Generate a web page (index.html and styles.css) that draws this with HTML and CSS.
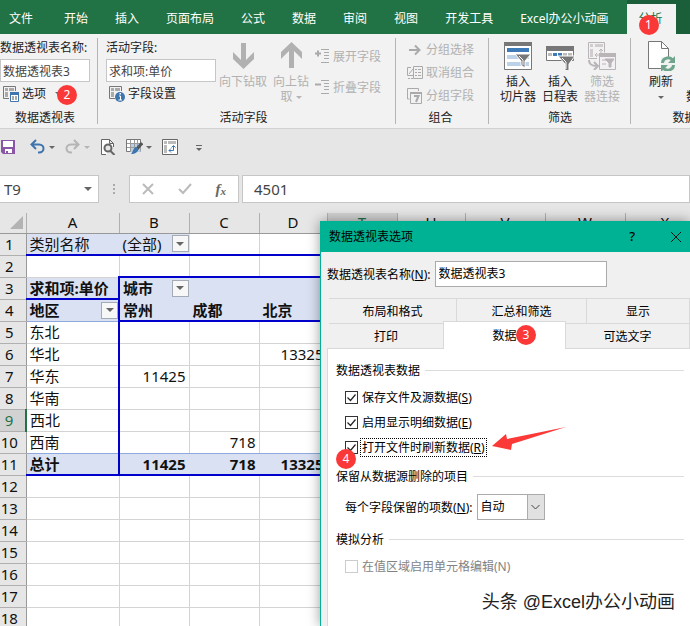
FILE: index.html
```html
<!DOCTYPE html>
<html lang="zh-CN">
<head>
    <meta charset="UTF-8">
    <meta name="viewport" content="width=device-width, initial-scale=1.0">
    <title>数据透视表选项</title>
    <link rel="stylesheet" href="styles.css">
</head>
<body>
    <div class="app">
        <nav class="tabs">
            <button class="tab file">文件</button>
            <button class="tab">开始</button>
            <button class="tab">插入</button>
            <button class="tab">页面布局</button>
            <button class="tab">公式</button>
            <button class="tab">数据</button>
            <button class="tab">审阅</button>
            <button class="tab">视图</button>
            <button class="tab">开发工具</button>
            <button class="tab last">Excel办公小动画</button>
            <div class="context-tabs">
                <button class="tab active">分析<span class="badge badge-1">1</span></button>
            </div>
        </nav>

        <div class="ribbon">
            <div class="group group-pivot">
                <div class="group-body">
                    <div class="field">
                        <label for="pivot-name">数据透视表名称:</label>
                        <input id="pivot-name" type="text" value="数据透视表3">
                        <button class="small-btn">
                            <svg width="16" height="16" viewBox="0 0 16 16" fill="none"><path d="M.5 12.500V.5h12V5M.5 12.500H6" stroke="#777"/><path d="M2 2h3v3H2zM6 2h5v3H6zM2 6h3v5H2z" fill="#aaa"/><path d="M7.500 6.500h8v9h-8z" fill="#fff" stroke="#3f75ad"/><path d="M7 6h9v3H7z" fill="#3f75ad"/><path d="M9 11h2M12 11h2M9 13h2M12 13h2" stroke="#555"/></svg>
                            选项
                            <i class="caret"></i>
                        </button>
                        <span class="badge badge-2">2</span>
                    </div>
                </div>
                <div class="group-name">数据透视表</div>
            </div>

            <div class="group group-field">
                <div class="group-body">
                    <div class="field">
                        <label for="active-field">活动字段:</label>
                        <input id="active-field" type="text" value="求和项:单价">
                        <button class="small-btn">
                            <svg width="16" height="16" viewBox="0 0 16 16" fill="none"><path d="M.5 12.500V.5h12V5M.5 12.500H6" stroke="#777"/><path d="M2 2h3v3H2zM6 2h5v3H6zM2 6h3v5H2z" fill="#aaa"/><circle cx="11" cy="11" r="5" fill="#3f75ad"/><path d="M10 10h1.500v4M9.500 14H13" stroke="#fff"/><path d="M10.500 7h1.500v1.500h-1.500z" fill="#fff"/></svg>
                            字段设置
                        </button>
                    </div>
                    <button class="big-btn" disabled>
                        <svg width="28" height="28" viewBox="0 0 28 28"><path d="M12 1h5v17l8-8v7L14.500 27 4 17v-7l8 8z" fill="#b1b1b1"/></svg>
                        <span>向下钻取</span>
                    </button>
                    <button class="big-btn" disabled>
                        <svg width="28" height="28" viewBox="0 0 28 28"><path d="M12 26h5V9l8 8v-7L14.500 0 4 10v7l8-8z" fill="#b1b1b1"/></svg>
                        <span>向上钻<br>取 <i class="caret"></i></span>
                    </button>
                    <div class="stack stack-wide">
                        <button class="small-btn" disabled>
                            <svg width="15" height="15" viewBox="0 0 15 15" fill="none" stroke="#aaa"><path d="M0 4.500h6M3 1.500v6" stroke-width="2"/><path d="M6 .5h8M9 3.500h5M9 6.500h5M9 9.500h5M6 13.500h8" /></svg>
                            展开字段
                        </button>
                        <button class="small-btn" disabled>
                            <svg width="15" height="15" viewBox="0 0 15 15" fill="none" stroke="#aaa"><path d="M0 4.500h6" stroke-width="2"/><path d="M6 .5h8M9 3.500h5M9 6.500h5M9 9.500h5M6 13.500h8"/></svg>
                            折叠字段
                        </button>
                    </div>
                </div>
                <div class="group-name">活动字段</div>
            </div>

            <div class="group group-combine">
                <div class="group-body">
                    <div class="stack">
                        <button class="small-btn" disabled>
                            <svg width="16" height="16" viewBox="0 0 16 16" fill="none"><path d="M2 8h10M8 3.500 12.500 8 8 12.500" stroke="#aaa" stroke-width="2"/></svg>
                            分组选择
                        </button>
                        <button class="small-btn" disabled>
                            <svg width="16" height="16" viewBox="0 0 16 16" fill="none" stroke="#aaa"><path d="M4 2.500H.5v8H7M1 13.500h2M4 13.500h2M2 9l4-5M6.500 1.500h9v12h-9zM8 4.500h2M11 4.500h3M8 7.500h2M11 7.500h3M8 10.500h2M11 10.500h3"/></svg>
                            取消组合
                        </button>
                        <button class="small-btn" disabled>
                            <svg width="16" height="16" viewBox="0 0 16 16" fill="none" stroke="#aaa"><path d="M2.500 11H.5V.5h11V3"/><path d="M3.500 4.500h11v11h-11z"/><path d="M3 5h12" stroke-width="2"/><path d="M7 8h4.500L9 14" stroke-width="2"/></svg>
                            分组字段
                        </button>
                    </div>
                </div>
                <div class="group-name">组合</div>
            </div>

            <div class="group group-filter">
                <div class="group-body">
                    <button class="big-btn">
                        <svg width="28" height="28" viewBox="0 0 28 28"><path d="M.5.5h27v27H.5z" fill="#fff" stroke="#777"/><path d="M0 0h28v4H0z" fill="#777"/><path d="M3 6h22v4H3z" fill="#3f7ab8"/><path d="M3 13h22v4H3zM3 20h22v4H3z" fill="#bcd2e8"/><path d="M11 12h16l-6 7v7l-4-3v-4z" fill="#777" stroke="#fff"/><path d="M15 14l4 4v5" fill="none" stroke="#fff"/></svg>
                        <span>插入<br>切片器</span>
                    </button>
                    <button class="big-btn">
                        <svg width="30" height="28" viewBox="0 0 30 28"><path d="M1.500 4.500h27v14h-27z" fill="#fff" stroke="#777"/><path d="M1 4h28v5H1z" fill="#777"/><path d="M3 11h4v3H3zM18 11h4v3h-4zM23 11h4v3h-4z" fill="#bbb"/><path d="M8 11h4v3H8zM13 11h4v3h-4z" fill="#3f7ab8"/><path d="M13 14h17l-6 8v8h-4v-8z" fill="#777" stroke="#fff"/><path d="M17 16l4 4v7" fill="none" stroke="#fff"/></svg>
                        <span>插入<br>日程表</span>
                    </button>
                    <button class="big-btn" disabled>
                        <svg width="28" height="28" viewBox="0 0 28 28" fill="none" stroke="#b8b4b8"><path d="M.5.5h16v10M.5.5v16H9"/><path d="M2 3.500h3M7 3.500h8M3.500 7v8" stroke-width="3" stroke="#d0ccd0"/><path d="M8 13h5M13 13V7M11 9l2-2 2 2M9 11l-2 2 2 2"/><path d="M1 18c0 5 3 6 8 6M6 20l4 4-4 4" stroke-width="2"/><path d="M11.500 11.500h16v16h-16z" fill="#f3f0f3"/><path d="M11 13h17" stroke-width="4"/><path d="M14 18h5M14 22h4"/><path d="M17 17h9l-3 4v4h-2v-4z" fill="#b8b4b8"/></svg>
                        <span>筛选<br>器连接</span>
                    </button>
                </div>
                <div class="group-name">筛选</div>
            </div>

            <div class="group group-data">
                <div class="group-body">
                    <button class="big-btn">
                        <svg width="28" height="30" viewBox="0 0 28 30" fill="none"><path d="M1.500.5h13l7 7v20h-20z" fill="#fff" stroke="#777"/><path d="M14.500.5v7h7" stroke="#777"/><path d="M14 16h14v14H14z" fill="#f2f2f2"/><path d="M15.500 22c0-5 7-7 10-3M26.500 24c0 5-7 7-10 3" stroke="#6fa58d" stroke-width="3"/><path d="M28 15v7h-7zM14 31v-7h7z" fill="#6fa58d"/></svg>
                        <span>刷新<br><i class="caret"></i></span>
                    </button>
                    <button class="big-btn">
                        <span class="icon-space"></span>
                        <span>更改<br>数据源</span>
                    </button>
                </div>
                <div class="group-name">数据</div>
            </div>
        </div>

        <div class="quick-bar">
            <button class="save" aria-label="保存">
                <svg width="16" height="16" viewBox="0 0 16 16"><path d="M1 1h14v14H3l-2-2z" fill="#8a56a8"/><path d="M3 2h10v6H3zM5 10h7v4H5z" fill="#fff"/><path d="M6 12h2v3H6z" fill="#8a56a8"/></svg>
            </button>
            <button aria-label="撤消">
                <svg width="16" height="16" viewBox="0 0 16 16" fill="none" stroke="#3f75ad" stroke-width="2"><path d="M6 1 1.500 5.500 6 10M2 5.500h7c6 0 6 8 0 8H8"/></svg>
                <i class="caret"></i>
            </button>
            <button aria-label="恢复" disabled>
                <svg width="16" height="16" viewBox="0 0 16 16" fill="none" stroke="#b5b5b5" stroke-width="2"><path d="m9 1 4.500 4.500L9 10M13 5.500H6c-6 0-6 8 0 8h1"/></svg>
                <i class="caret"></i>
            </button>
            <button aria-label="打印预览">
                <svg width="16" height="16" viewBox="0 0 16 16" fill="none" stroke="#666"><path d="M6 15.500H1.500V.5h8L13.500 4.500V8M9.500.5v4h4" fill="#fff"/><circle cx="8" cy="9" r="3.500" stroke-width="2" fill="#e6e6e6"/><path d="m10.500 12 4 4" stroke-width="2"/></svg>
            </button>
            <button aria-label="套用表格格式">
                <svg width="17" height="16" viewBox="0 0 17 16" fill="none"><path d="M.5.5h14v12H.5z" fill="#fff" stroke="#777"/><path d="M4.500 5h10v8h-10z" fill="#b9cfe6"/><path d="M1 4.500h14M1 8.500h14M4.500 1v11M8.500 1v11M11.500 1v11" stroke="#999"/><path d="m16 4-5 6" stroke="#555" stroke-width="3"/><path d="M12 9c1 4-3 6-7 6 2-2 2-6 5-7z" fill="#3f75ad"/></svg>
                <i class="caret"></i>
            </button>
            <button aria-label="数据透视表">
                <svg width="16" height="16" viewBox="0 0 16 16" fill="none"><path d="M.5.5h15v15H.5z" fill="#fff" stroke="#666"/><path d="M2 2h3v3H2zM6 2h8v3H6zM2 6h3v8H2z" fill="#bbb"/><path d="M7 11.500h4.500V7M9.500 8.500l2-2 2 2M9 9.500l-2 2 2 2" stroke="#3f75ad"/></svg>
            </button>
            <button class="more" aria-label="自定义快速访问工具栏"><i class="caret"></i></button>
        </div>

        <div class="formula-bar">
            <div class="name-box">
                <input type="text" value="T9" aria-label="名称框">
                <i class="caret"></i>
            </div>
            <div class="grip"><i></i><i></i><i></i></div>
            <div class="formula-btns">
                <button aria-label="取消"><svg width="12" height="12" viewBox="0 0 12 12"><path d="m1 1 10 10M11 1 1 11" stroke="#bbb" stroke-width="2"/></svg></button>
                <button aria-label="输入"><svg width="14" height="12" viewBox="0 0 14 12"><path d="m1 6 4 4 8-9" fill="none" stroke="#bbb" stroke-width="2"/></svg></button>
                <button class="fx">f<sub>x</sub></button>
            </div>
            <input class="formula" type="text" value="4501" aria-label="编辑栏">
        </div>

        <div class="sheet">
            <table>
                <colgroup>
                    <col class="w-row"><col class="w-a"><col class="w-b"><col class="w-b"><col class="w-d"><col class="w-b"><col class="w-d"><col class="w-v"><col class="w-v"><col class="w-v">
                </colgroup>
                <thead>
                    <tr>
                        <th class="corner"><svg width="13" height="13" viewBox="0 0 13 13"><path d="M13 0v13H0z" fill="#b3b3b3"/></svg></th>
                        <th>A</th><th>B</th><th>C</th><th>D</th><th class="current">T</th><th>U</th><th>V</th><th>W</th><th>X</th>
                    </tr>
                </thead>
                <tbody>
                    <tr class="line"><th>1</th><td class="fill">类别名称</td><td class="fill"><div class="cell">(全部)<button class="filter" aria-label="筛选"><i class="caret"></i></button></div></td><td></td><td></td><td></td><td></td><td></td><td></td><td></td></tr>
                    <tr class="line"><th>2</th><td class="plain"></td><td></td><td></td><td></td><td></td><td></td><td></td><td></td><td></td></tr>
                    <tr class="head"><th>3</th><td class="edge under">求和项:单价</td><td><div class="cell">城市<button class="filter" aria-label="筛选"><i class="caret"></i></button></div></td><td></td><td></td><td></td><td></td><td></td><td></td><td></td></tr>
                    <tr class="head line"><th>4</th><td class="edge thin"><div class="cell">地区<button class="filter" aria-label="筛选"><i class="caret"></i></button></div></td><td>常州</td><td>成都</td><td>北京</td><td></td><td></td><td></td><td></td><td></td></tr>
                    <tr><th>5</th><td class="edge">东北</td><td></td><td></td><td></td><td></td><td></td><td></td><td></td><td></td></tr>
                    <tr><th>6</th><td class="edge">华北</td><td></td><td></td><td class="num">13325</td><td></td><td></td><td></td><td></td><td></td></tr>
                    <tr><th>7</th><td class="edge">华东</td><td class="num">11425</td><td></td><td></td><td></td><td></td><td></td><td></td><td></td></tr>
                    <tr><th>8</th><td class="edge">华南</td><td></td><td></td><td></td><td></td><td></td><td></td><td></td><td></td></tr>
                    <tr><th class="current">9</th><td class="edge">西北</td><td></td><td></td><td></td><td></td><td></td><td></td><td></td><td></td></tr>
                    <tr class="before-total"><th>10</th><td class="edge">西南</td><td></td><td class="num">718</td><td></td><td></td><td></td><td></td><td></td><td></td></tr>
                    <tr class="head line"><th>11</th><td class="edge">总计</td><td class="num">11425</td><td class="num">718</td><td class="num">13325</td><td></td><td></td><td></td><td></td><td></td></tr>
                    <tr><th>12</th><td></td><td></td><td></td><td></td><td></td><td></td><td></td><td></td><td></td></tr>
                    <tr><th>13</th><td></td><td></td><td></td><td></td><td></td><td></td><td></td><td></td><td></td></tr>
                    <tr><th>14</th><td></td><td></td><td></td><td></td><td></td><td></td><td></td><td></td><td></td></tr>
                    <tr><th>15</th><td></td><td></td><td></td><td></td><td></td><td></td><td></td><td></td><td></td></tr>
                    <tr><th>16</th><td></td><td></td><td></td><td></td><td></td><td></td><td></td><td></td><td></td></tr>
                    <tr><th>17</th><td></td><td></td><td></td><td></td><td></td><td></td><td></td><td></td><td></td></tr>
                    <tr><th>18</th><td></td><td></td><td></td><td></td><td></td><td></td><td></td><td></td><td></td></tr>
                </tbody>
            </table>
        </div>

        <div class="dialog" role="dialog" aria-labelledby="dialog-title">
            <div class="title-bar">
                <span id="dialog-title">数据透视表选项</span>
                <button class="help" aria-label="帮助">?</button>
                <button aria-label="关闭"><svg width="12" height="12" viewBox="0 0 12 12"><path d="m1 1 10 10M11 1 1 11" stroke="#111"/></svg></button>
            </div>
            <div class="name-row">
                <label for="dialog-name">数据透视表名称(<u>N</u>):</label>
                <input id="dialog-name" type="text" value="数据透视表3">
            </div>
            <div class="dialog-tabs">
                <div class="tab-row upper">
                    <button>布局和格式</button>
                    <button>汇总和筛选</button>
                    <button>显示</button>
                </div>
                <div class="tab-row lower">
                    <button>打印</button>
                    <button class="active">数据<span class="badge badge-3">3</span></button>
                    <button>可选文字</button>
                </div>
            </div>
            <div class="panel">
                <h2>数据透视表数据</h2>
                <div class="check">
                    <input id="save-source" type="checkbox" checked>
                    <label for="save-source">保存文件及源数据(<u>S</u>)</label>
                </div>
                <div class="check">
                    <input id="show-detail" type="checkbox" checked>
                    <label for="show-detail">启用显示明细数据(<u>E</u>)</label>
                </div>
                <div class="check">
                    <input id="refresh-open" type="checkbox" checked>
                    <label for="refresh-open" class="focused">打开文件时刷新数据(<u>R</u>)</label>
                    <span class="badge badge-4">4</span>
                    <svg class="arrow" width="76" height="26" viewBox="0 0 76 26"><path d="M0 20 14 8l1 5L74 1 20 18l-1 6z" fill="#fb3a38"/></svg>
                </div>
                <h2>保留从数据源删除的项目</h2>
                <div class="select-row">
                    <label for="keep-items">每个字段保留的项数(<u>N</u>):</label>
                    <div class="select">
                        <select id="keep-items"><option>自动</option></select>
                        <svg width="17" height="24" viewBox="0 0 17 24"><path d="M0 0h17v24H0z" fill="#e1e1e1"/><path d="M.5 0v24" stroke="#acacac"/><path d="m4.500 10 4 4 4-4" fill="none" stroke="#444"/></svg>
                    </div>
                </div>
                <h2>模拟分析</h2>
                <div class="check">
                    <input id="what-if" type="checkbox" disabled>
                    <label for="what-if">在值区域启用单元格编辑(N)</label>
                </div>
            </div>
            <div class="watermark">头条 @Excel办公小动画</div>
        </div>
    </div>
</body>
</html>
```
FILE: styles.css
```css
* {
    box-sizing: border-box;
}
body {
    margin: 0;
    font-family: "Noto Sans", "Noto Sans CJK SC", sans-serif;
    font-size: 12px;
    line-height: 15px;
    color: #222;
}
button, input, select {
    font: inherit;
    color: inherit;
}
button {
    background: none;
    border: none;
    padding: 0;
    white-space: nowrap;
}
svg {
    display: block;
    flex-shrink: 0;
}
.app {
    position: relative;
    display: flex;
    flex-direction: column;
    height: 100vh;
    overflow: hidden;
    background: #e6e6e6;
}
.caret {
    display: inline-block;
    flex-shrink: 0;
    border: 3px solid transparent;
    border-top-color: #666;
    border-bottom: none;
    vertical-align: middle;
}
button:disabled .caret {
    border-top-color: #b5b5b5;
}
.badge {
    position: absolute;
    width: 20px;
    height: 20px;
    border-radius: 50%;
    background: #fb3838;
    color: white;
    line-height: 20px;
    text-align: center;
}
.badge-1 {
    left: 12px;
    top: 11px;
}
.badge-2 {
    left: 57px;
    bottom: 0;
}
.badge-3 {
    left: 72px;
    top: 3px;
}
.badge-4 {
    left: 0;
    top: 14px;
}

/* Ribbon tabs */
.tabs {
    display: flex;
    flex-shrink: 0;
    height: 34px;
    background: #217346;
    color: white;
}
.tab {
    flex-shrink: 0;
    padding: 2px 14px 0 13px;
}
.tab.file {
    padding: 2px 18px 0 9px;
}
.tab.last {
    padding-right: 18px;
}
.context-tabs {
    flex-grow: 1;
    padding-top: 4px;
    background: #1b5e3a;
    display: flex;
}
.tab.active {
    position: relative;
    background: #f2f2f2;
    color: #217346;
    padding: 0 13px 2px 12px;
}

/* Ribbon */
.ribbon {
    display: flex;
    flex-shrink: 0;
    padding: 4px 0;
    background: #f2f2f2;
    border-bottom: 1px solid #d2d2d2;
    overflow: hidden;
}
.group {
    display: flex;
    flex-direction: column;
    flex-shrink: 0;
    height: 86px;
    border-right: 1px solid #b5b5b5;
}
.group-pivot {
    padding-right: 7px;
}
.group-field {
    padding: 0 14px 0 8px;
}
.group-combine {
    padding: 0 14px 0 11px;
}
.group-filter {
    padding: 0 10px 0 11px;
}
.group-data {
    padding: 0 16px;
}
.group-body {
    display: flex;
    flex-grow: 1;
    gap: 6px;
}
.group-name {
    text-align: center;
    height: 15px;
    line-height: 17px;
}
.field {
    position: relative;
    display: flex;
    flex-direction: column;
    align-items: flex-start;
    height: 67px;
}
.field label {
    height: 22px;
    line-height: 19px;
}
.field input {
    width: 90px;
    height: 23px;
    padding: 0 2px;
    border: 1px solid #c6c6c6;
    background: white;
    color: #444;
}
.field .small-btn {
    margin-top: 1px;
}
.group-field .field {
    margin-right: -3px;
}
.group-field .field input {
    width: 110px;
}
.small-btn {
    display: flex;
    align-items: center;
    gap: 3px;
    height: 23px;
    padding-left: 3px;
}
.small-btn .caret {
    margin-left: 6px;
}
.small-btn:disabled, .big-btn:disabled {
    color: #b1b1b1;
}
.stack {
    display: flex;
    flex-direction: column;
}
.stack .small-btn {
    padding-left: 0;
}
.stack-wide {
    padding-top: 7px;
    gap: 8px;
}
.big-btn {
    display: flex;
    flex-direction: column;
    align-items: center;
    justify-content: flex-start;
    padding-top: 4px;
    flex-shrink: 0;
}
.big-btn span {
    margin-top: 4px;
}
.group-filter .big-btn {
    min-width: 36px;
}
.group-data .group-body {
    gap: 11px;
}
.group-data svg {
    margin: -1px 0;
}
.icon-space {
    height: 24px;
}

/* Quick access */
.quick-bar {
    display: flex;
    align-items: center;
    flex-shrink: 0;
    gap: 10px;
    height: 36px;
}
.quick-bar button {
    display: flex;
    align-items: center;
    gap: 3px;
}
.quick-bar .save {
    width: 20px;
}
.quick-bar .more {
    justify-content: center;
    width: 22px;
}
.more .caret {
    position: relative;
    top: 2px;
}
.more .caret::before {
    content: "";
    position: absolute;
    left: -3px;
    top: -6px;
    width: 6px;
    height: 1px;
    background: #666;
}

/* Formula bar */
.formula-bar {
    display: flex;
    flex-shrink: 0;
    height: 28px;
    margin: 10px 0;
    font-size: 15px;
    color: #444;
}
.name-box, .formula-btns, .formula {
    background: white;
    border: 1px solid #c6c6c6;
}
.name-box {
    display: flex;
    align-items: center;
    width: 99px;
    border-left: none;
    padding: 0 6px 0 4px;
}
.name-box input {
    flex: 1;
    min-width: 0;
    padding: 0;
    border: none;
}
.name-box .caret {
    border-width: 4px 4px 0;
}
.grip {
    display: flex;
    flex-direction: column;
    align-items: center;
    justify-content: center;
    gap: 2px;
    width: 30px;
}
.grip i {
    width: 2px;
    height: 2px;
    background: #aaa;
}
.formula-btns {
    display: flex;
    align-items: center;
    justify-content: space-around;
    width: 110px;
    margin-right: 3px;
}
.fx {
    font: italic bold 15px "Liberation Serif", serif;
    color: #666;
}
.fx sub {
    font-size: 11px;
    vertical-align: -1px;
}
.formula {
    flex: 1;
    min-width: 0;
    padding: 0 11px;
}

/* Sheet */
.sheet {
    flex: 1;
    min-height: 0;
    overflow: hidden;
}
table {
    table-layout: fixed;
    width: 705px;
    border-collapse: collapse;
    font-size: 15px;
    line-height: 20px;
    color: #111;
}
.w-row {
    width: 26px;
}
.w-a {
    width: 93px;
}
.w-b {
    width: 70px;
}
.w-d {
    width: 68px;
}
.w-v {
    width: 80px;
}
td {
    height: 22px;
    padding: 0 3px;
    background: white;
    border-right: 1px solid #d4d4d4;
    border-bottom: 1px solid #d4d4d4;
    white-space: nowrap;
}
th {
    font-weight: normal;
    padding: 0;
    background: #e6e6e6;
    border-right: 1px solid #b0b0b0;
    border-bottom: 1px solid #b0b0b0;
}
thead th {
    height: 20px;
    line-height: 19px;
    border-bottom-color: #999;
}
tbody th {
    padding-right: 7px;
    border-right-color: #999;
}
.corner svg {
    margin-left: 10px;
}
th.current {
    background: #d2d2d2;
    color: #217346;
}
tbody th.current {
    border-right: 2px solid #217346;
}
.fill, .head td {
    background: #d9e1f2;
    border-right-color: #d9e1f2;
    border-bottom-color: #d9e1f2;
}
.head td {
    font-weight: bold;
}
.line td {
    border-bottom: 2px solid #0000cd;
}
.line td.plain {
    border-bottom: 1px solid #d4d4d4;
}
td.edge {
    border-right: 2px solid #0000cd;
    padding-right: 0;
}
td.under {
    border-bottom: 2px solid #0000cd;
}
.line td.thin, .before-total td {
    border-bottom: 1px solid #8ea9db;
}
.num {
    text-align: right;
}
.cell {
    display: flex;
    align-items: center;
    justify-content: space-between;
    height: 20px;
    margin-right: -3px;
}
.edge .cell {
    margin-right: 0;
}
.filter {
    display: flex;
    align-items: center;
    justify-content: center;
    width: 17px;
    height: 17px;
    background: #f7f7f7;
    border: 1px solid #a5abb5;
}
.filter .caret {
    border-width: 4px 4px 0;
}

/* Options dialog */
.dialog {
    position: absolute;
    left: 320px;
    top: 221px;
    right: 0;
    bottom: 0;
    display: flex;
    flex-direction: column;
    background: #f0f0f0;
    border-left: 1px solid #00b294;
    box-shadow: 0 0 12px rgba(0, 0, 0, 0.4);
    color: #000;
}
.title-bar {
    display: flex;
    align-items: center;
    flex-shrink: 0;
    gap: 35px;
    height: 31px;
    padding: 0 8px;
    background: #00b294;
}
.title-bar span {
    flex: 1;
}
.title-bar .help {
    font-size: 13px;
    font-weight: 500;
}
.name-row {
    display: flex;
    align-items: center;
    gap: 4px;
    padding: 9px 6px 11px;
}
.name-row input {
    width: 172px;
    height: 26px;
    padding: 0 3px 2px;
    border: 1px solid #ababab;
    background: white;
}
.dialog-tabs {
    margin-left: 8px;
}
.tab-row {
    display: grid;
    height: 25px;
}
.upper {
    grid-template-columns: 128fr 130fr 103fr;
}
.lower {
    grid-template-columns: 115fr 122fr 124fr;
}
.tab-row button {
    border-top: 1px solid #d9d9d9;
    border-right: 1px solid #d9d9d9;
}
.tab-row .active {
    position: relative;
    margin: -2px 0 -1px -1px;
    background: white;
    border-left: 1px solid #d9d9d9;
    z-index: 1;
}
.panel {
    flex: 1;
    margin-left: 6px;
    padding: 5px 6px 0 8px;
    background: white;
    border: 1px solid #d9d9d9;
    border-width: 1px 0 0 1px;
}
.panel h2 {
    display: flex;
    align-items: center;
    gap: 5px;
    height: 18px;
    margin: 7px 0 6px;
    font-size: 12px;
    font-weight: normal;
}
.panel h2::after {
    content: "";
    flex: 1;
    height: 1px;
    background: #dcdcdc;
}
.check {
    position: relative;
    display: flex;
    align-items: center;
    gap: 2px;
    height: 25px;
    padding-left: 9px;
}
.check input {
    appearance: none;
    width: 13px;
    height: 13px;
    margin: 0;
    border: 1px solid #333;
    background: white;
}
.check input:checked {
    background: url("data:image/svg+xml,%3Csvg xmlns='http://www.w3.org/2000/svg' viewBox='0 0 11 11'%3E%3Cpath d='M1.500 5.500l3 3 5-6' fill='none' stroke='%23222' stroke-width='1.200'/%3E%3C/svg%3E");
}
.check input:disabled {
    border-color: #ccc;
}
.check input:disabled + label {
    color: #838383;
}
.check label {
    padding: 1px;
    border: 1px solid transparent;
}
.check label.focused {
    border: 1px dotted #000;
}
.arrow {
    position: absolute;
    left: 156px;
    top: -9px;
}
.select-row {
    display: flex;
    align-items: center;
    gap: 4px;
    padding: 3px 0 3px 9px;
}
.select {
    position: relative;
}
.select select {
    appearance: none;
    display: block;
    width: 68px;
    height: 26px;
    padding: 0 3px 2px;
    border: 1px solid #ababab;
    border-radius: 0;
    background: white;
}
.select svg {
    position: absolute;
    right: 1px;
    top: 1px;
    pointer-events: none;
}
.watermark {
    position: absolute;
    right: 15px;
    bottom: 14px;
    font-family: "Liberation Sans", "Noto Sans CJK SC", sans-serif;
    font-size: 18px;
    line-height: 20px;
    color: #222;
    text-shadow: 1px 1px 1px white;
}
```
